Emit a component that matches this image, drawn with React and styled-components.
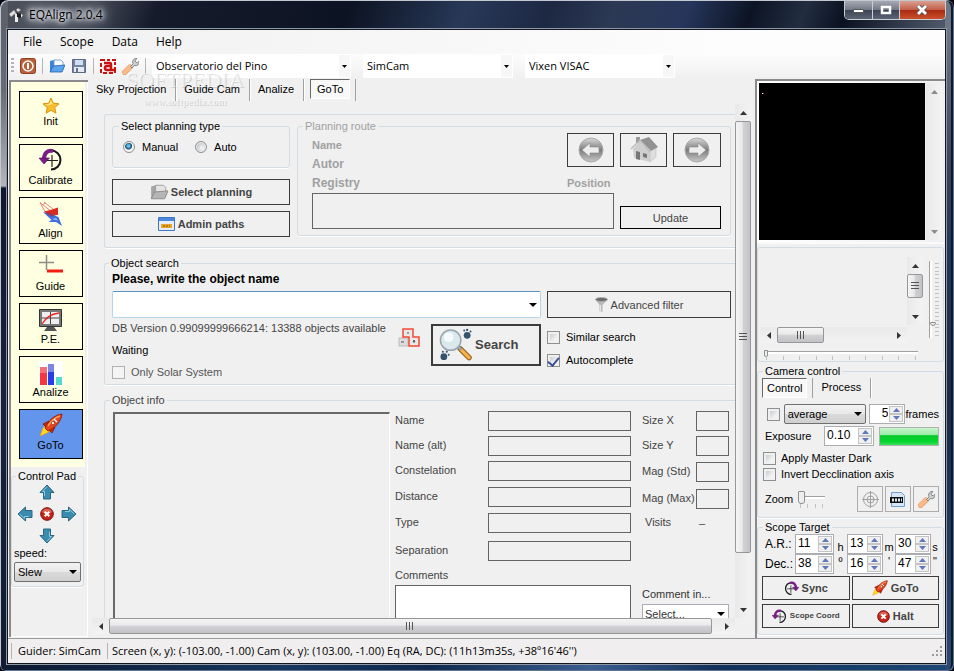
import React from 'react'
import styled, { createGlobalStyle, css } from 'styled-components'

const ui = `"Open Sans", "Noto Sans", sans-serif`;
const sans = `"Liberation Sans", Arial, sans-serif`;

const GlobalStyle = createGlobalStyle`
  * {
    box-sizing: border-box;
  }
  body {
    margin: 0;
    background: #05070f;
    overflow: hidden;
    font-family: ${sans};
    font-size: 11px;
    line-height: 14px;
    color: #000;
  }
  button, input, select, textarea {
    font: inherit;
    color: inherit;
    margin: 0;
    border-radius: 0;
  }
  svg {
    display: block;
    flex: none;
  }
`;

/* ---------- window frame ---------- */

const Window = styled.div`
  height: 100vh;
  display: flex;
  flex-direction: column;
  padding: 0 8px 7px 7px;
  border-radius: 8px 8px 6px 6px;
  box-shadow: inset 1px 1px 0 #c3c8d0, inset -1px -1px 0 #5e7594, inset -3px 0 0 #10182a;
  background:
    linear-gradient(to bottom, #5d626c 30px, #686c76 90px, #b4b4ba 186px, #0f1830 188px, #16233f 60%, #101b33) left / 8px 100% no-repeat,
    linear-gradient(to bottom, #6d7684 30px, #3a4355 170px, #26385a 240px, #1a2a49 60%, #2b4872) right / 9px 100% no-repeat,
    linear-gradient(to right, #0c1830, #17375f 30%, #10284c 45%, #3b5e90 62%, #12305a 75%, #1d4775) bottom / 100% 8px no-repeat,
    linear-gradient(110deg, #4b505b 0, #454a56 90px, #151b2b 150px, #0c1322 330px, #283858 440px, #1d2843 520px, #2c3954 580px, #26355a 650px, #0c1424 710px, #222d40 760px, #0a1120 800px, #3c4657 870px, #6e7888 940px);
`;

const TitleBar = styled.header`
  height: 29px;
  flex: none;
  display: flex;
  align-items: center;
  padding-left: 2px;
`;

const Title = styled.h1`
  flex: 1;
  margin: 0 0 0 5px;
  font: 400 12px/16px ${ui};
  text-shadow: 0 0 4px #fff, 0 0 6px #fff, 0 0 10px #dfe6f0, 0 0 12px #c4cedc, 0 0 16px #c4cedc;
`;

const CaptionButtons = styled.div`
  align-self: flex-start;
  display: flex;
  margin-top: 1px;
  border: 1px solid #c9ced6;
  border-top: 0;
  border-radius: 0 0 5px 5px;
  overflow: hidden;
`;

const CaptionButton = styled.button`
  width: ${({ $close }) => ($close ? 46 : 27)}px;
  height: 18px;
  padding: 0;
  border: 0;
  border-left: ${({ $first }) => ($first ? '0' : '1px solid #c9ced6')};
  display: grid;
  place-items: center;
  background: ${({ $close }) =>
    $close
      ? 'linear-gradient(#d9a090, #c4604a 48%, #a82a10 50%, #c9502c)'
      : 'linear-gradient(#a4a9b3, #737986 48%, #3c4353 50%, #5b6475)'};
`;

const Client = styled.div`
  flex: 1;
  min-height: 0;
  display: flex;
  flex-direction: column;
  border: 1px solid #10151f;
  outline: 1px solid #8d97a6;
  background: #f0f0f0;
`;

const MenuBar = styled.nav`
  height: 24px;
  flex: none;
  display: flex;
  align-items: center;
  gap: 18px;
  padding-left: 15px;
  background: linear-gradient(to right, #f0f0f0, #fdfdfd 80%);
`;

const MenuItem = styled.button`
  padding: 0;
  border: 0;
  background: none;
  font: 12px/16px ${ui};
`;

const Toolbar = styled.div`
  height: 24px;
  flex: none;
  display: flex;
  align-items: center;
  gap: 6px;
  padding-left: 3px;
  background: linear-gradient(#fdfdfd, #f0f0f0);
`;

const Grip = styled.span`
  width: 3px;
  height: 16px;
  background: repeating-linear-gradient(#b4b4b4 0 2px, transparent 2px 4px);
`;

const Separator = styled.span`
  width: 1px;
  height: 16px;
  background: #b5b5b5;
`;

const IconButton = styled.button`
  padding: 0;
  border: 0;
  background: none;
`;

const ToolbarCombos = styled.div`
  display: flex;
  gap: 12px;
`;

/* ---------- controls ---------- */

const Stack = styled.span`
  display: grid;
  width: ${({ $width }) => ($width ? `${$width}px` : 'auto')};
  flex: none;
  align-items: center;

  > * {
    grid-area: 1 / 1;
  }
  > svg {
    justify-self: end;
    margin-right: 4px;
    pointer-events: none;
  }
`;

const lookOf = {
  tool: css`
    height: 24px;
    padding: 0 20px 0 4px;
    border: 0;
    background: linear-gradient(#f7f7f7, #f7f7f7) right 1px center / 11px 22px no-repeat #fff;
    font: 11px/16px ${ui};
  `,
  button: css`
    height: 20px;
    padding: 0 16px 0 3px;
    border: 1px solid #707070;
    border-radius: 2px;
    background: linear-gradient(#f2f2f2, #e8e8e8 50%, #dadada 50%, #cfcfcf);
  `,
  field: css`
    height: 20px;
    padding: 0 16px 0 2px;
    border: 1px solid #a9adb8;
    background: #fff;
  `,
};

const SelectBox = styled.select`
  width: 100%;
  min-width: 0;
  appearance: none;
  outline: none;
  ${({ $look }) => lookOf[$look]}
`;

const Combo = ({ label, value, width, look, id }) => (
  <Stack $width={width}>
    <SelectBox $look={look} aria-label={label} id={id}>
      <option>{value}</option>
    </SelectBox>
    {look === 'tool' ? (
      <svg width="5" height="3"><path d="M0 0h5L2.500 3z" fill="#000" /></svg>
    ) : (
      <svg width="8" height="4"><path d="M0 0h8l-4 4z" fill="#000" /></svg>
    )}
  </Stack>
);

const Check = styled.input.attrs({ type: 'checkbox' })`
  appearance: none;
  width: 13px;
  height: 13px;
  flex: none;
  display: grid;
  justify-items: center;
  align-items: start;
  border: 1px solid #8e8f8f;
  background: linear-gradient(135deg, #c8ced4, #f4f4f4 80%) content-box #f4f4f4;
  padding: 2px;

  &:disabled {
    border-color: #b1b1b1;
    background: #f4f4f4;
  }
  &:checked::after {
    content: "";
    width: 5px;
    height: 9px;
    margin-top: -2px;
    border: solid #3a4f94;
    border-width: 0 2px 2px 0;
    transform: rotate(40deg);
  }
`;

const Radio = styled.input.attrs({ type: 'radio' })`
  appearance: none;
  width: 12px;
  height: 12px;
  flex: none;
  border: 1px solid #8e8f8f;
  border-radius: 50%;
  background: ${({ defaultChecked }) =>
    defaultChecked
      ? 'radial-gradient(circle at 45% 40%, #6cc4ee 0 1px, #0d5583 3px, #1c3b52 3px, #f4f4f4 4px)'
      : 'radial-gradient(circle at 60% 60%, #fafafa, #c6cacd 5px)'};
  box-shadow: inset 0 0 0 1px #f4f4f4;
`;

const Label = styled.label`
  display: flex;
  align-items: center;
  gap: ${({ $gap }) => $gap || 5}px;
  color: ${({ $muted }) => ($muted ? '#555' : '#000')};
  line-height: 16px;
  white-space: nowrap;
`;

const Group = styled.fieldset`
  min-width: 0;
  margin: 0;
  padding: ${({ $pad }) => $pad || '0 4px'};
  border: 1px solid #d2dce3;
  border-radius: 3px;
  box-shadow: 0 1px 0 #fff;
  height: ${({ $height }) => ($height ? `${$height}px` : 'auto')};
  ${({ $open }) => $open && 'border-right: 0; border-radius: 3px 0 0 3px;'}
`;

const Legend = styled.legend`
  margin-left: ${({ $indent }) => $indent || 0}px;
  padding: 0 2px;
  height: 14px;
  color: ${({ $tone }) => $tone || '#000'};
`;

const FlatButton = styled.button`
  display: flex;
  align-items: center;
  justify-content: center;
  gap: 3px;
  height: ${({ $height }) => $height || 24}px;
  padding: 0;
  border: ${({ $thick }) => ($thick ? 2 : 1)}px solid ${({ $edge }) => $edge || '#3c3c3c'};
  background: #f0f0f0;
  color: #444;
  font-weight: ${({ $plain }) => ($plain ? 400 : 700)};
  font-size: ${({ $size }) => $size || 11}px;
  white-space: nowrap;
`;

const TextField = styled.input`
  width: 100%;
  min-width: 0;
  height: ${({ $height }) => $height || 20}px;
  border: 1px solid #646464;
  background: #f0f0f0;
  outline: none;
`;

const SpinBox = styled.span`
  display: flex;
  width: ${({ $width }) => $width}px;
  height: 20px;
  padding: 1px;
  border: 1px solid #abadb3;
  background: #fff;
`;

const SpinInput = styled.input`
  flex: 1;
  width: 0;
  min-width: 0;
  padding: 0 1px 2px;
  border: 0;
  outline: none;
  background: none;
  font-size: 12px;
  text-align: ${({ $right }) => ($right ? 'right' : 'left')};
`;

const SpinArrows = styled.span`
  display: grid;
  width: 14px;
  grid-template-rows: 1fr 1fr;
`;

const SpinArrow = styled.button`
  display: grid;
  place-items: center;
  padding: 0;
  border: 1px solid #c4c4c4;
  background: #f0f0f0;
`;

const Spin = ({ label, value, width, right, id }) => (
  <SpinBox $width={width}>
    <SpinInput id={id} aria-label={label} defaultValue={value} $right={right} />
    <SpinArrows>
      <SpinArrow aria-label="Up">
        <svg width="7" height="4"><path d="M0 4h7L3.500 0z" fill="#5f78b8" /></svg>
      </SpinArrow>
      <SpinArrow aria-label="Down">
        <svg width="7" height="4"><path d="M0 0h7L3.500 4z" fill="#5f78b8" /></svg>
      </SpinArrow>
    </SpinArrows>
  </SpinBox>
);

/* ---------- scrollbars and sliders ---------- */

const Track = styled.div`
  display: flex;
  flex-direction: ${({ $vertical }) => ($vertical ? 'column' : 'row')};
  width: ${({ $vertical }) => ($vertical ? '16px' : 'auto')};
  height: ${({ $vertical }) => ($vertical ? 'auto' : '16px')};
  min-width: 0;
  min-height: 0;
  background: linear-gradient(${({ $vertical }) => ($vertical ? 'to right' : 'to bottom')}, #e9e9e9, #f3f3f3);
`;

const TrackEnd = styled.button`
  flex: 0 0 17px;
  display: grid;
  place-items: center;
  padding: 0;
  border: 0;
  background: none;
`;

const Lane = styled.div`
  flex: 1;
  min-height: 0;
  display: flex;
  flex-direction: inherit;
`;

const Thumb = styled.div`
  flex: 0 0 ${({ $size }) => $size};
  display: grid;
  place-items: center;
  border: 1px solid #979797;
  border-radius: 2px;
  background: linear-gradient(${({ $vertical }) => ($vertical ? 'to right' : 'to bottom')}, #f5f5f5, #e9e9eb 45%, #d2d2d5 50%, #c3c3c7);
`;

const ends = {
  up: 'M0 4l3.500-4L7 4z',
  down: 'M0 0h7L3.500 4z',
  left: 'M4 0v7L0 3.500z',
  right: 'M0 0v7l4-3.500z',
};

const End = ({ dir, dim }) => (
  <TrackEnd aria-label={dir}>
    <svg width={dir === 'up' || dir === 'down' ? 7 : 4} height={dir === 'up' || dir === 'down' ? 4 : 7}>
      <path d={ends[dir]} fill={dim ? '#8b8b8b' : '#333'} />
    </svg>
  </TrackEnd>
);

const ScrollBar = ({ vertical, size, dim }) => (
  <Track $vertical={vertical}>
    <End dir={vertical ? 'up' : 'left'} dim={dim} />
    <Lane>
      {size && (
        <Thumb $vertical={vertical} $size={size}>
          <svg width="8" height="8" stroke="#555" strokeWidth="1">
            <path d={vertical ? 'M0 .5h8M0 3.500h8M0 6.500h8' : 'M.5 0v8M3.500 0v8M6.500 0v8'} />
          </svg>
        </Thumb>
      )}
    </Lane>
    <End dir={vertical ? 'down' : 'right'} dim={dim} />
  </Track>
);

const knob = css`
  appearance: none;
  border: 1px solid #8e8f8f;
  border-radius: 1px 1px 3px 3px;
  background: #efefef;
`;

const Slider = styled.input.attrs({ type: 'range' })`
  appearance: none;
  display: block;
  background: none;
  outline: none;
  width: 100%;
  height: ${({ $big }) => ($big ? 14 : 8)}px;

  &::-webkit-slider-runnable-track {
    height: 3px;
    border-top: 1px solid #a0a0a0;
    background: #fff;
  }
  &::-webkit-slider-thumb {
    ${knob}
    width: ${({ $big }) => ($big ? 7 : 4)}px;
    height: ${({ $big }) => ($big ? 13 : 7)}px;
    margin-top: ${({ $big }) => ($big ? -6 : -2)}px;
  }
`;

const TallSlider = styled.input.attrs({ type: 'range' })`
  appearance: none;
  writing-mode: vertical-lr;
  direction: rtl;
  width: 7px;
  height: 100%;
  background: none;
  outline: none;

  &::-webkit-slider-runnable-track {
    width: 3px;
    border-left: 1px solid #a0a0a0;
    background: #fff;
  }
  &::-webkit-slider-thumb {
    ${knob}
    width: 6px;
    height: 4px;
  }
`;

const Ticks = styled.div`
  display: flex;
  flex-direction: ${({ $vertical }) => ($vertical ? 'column' : 'row')};
  justify-content: space-between;
  padding: ${({ $vertical }) => ($vertical ? '2px 0' : '0 2px')};

  span {
    background: #c2c2c2;
    width: ${({ $vertical }) => ($vertical ? 4 : 1)}px;
    height: ${({ $vertical }) => ($vertical ? 1 : 4)}px;
  }
`;

const TickRow = ({ count, vertical }) => (
  <Ticks $vertical={vertical}>
    {Array.from({ length: count }, (_, i) => <span key={i} />)}
  </Ticks>
);

/* ---------- left column ---------- */

const Body = styled.main`
  flex: 1;
  min-height: 0;
  display: flex;
`;

const LeftColumn = styled.aside`
  width: 79px;
  flex: none;
  display: flex;
  flex-direction: column;
  align-items: flex-start;
  gap: 2px;
  margin: 2px 0 1px 1px;
  border: solid #8a8a8a;
  border-width: 2px 0 0 2px;
  box-shadow: inset -1px -1px 0 #fff;
`;

const Steps = styled.div`
  display: flex;
  flex-direction: column;
  gap: 6px;
  width: 74px;
  padding: 9px 2px 8px 8px;
  background: #ffffe1;
`;

const Step = styled.button`
  display: flex;
  flex-direction: column;
  align-items: center;
  justify-content: flex-end;
  gap: ${({ $gap }) => $gap || 0}px;
  height: ${({ $active }) => ($active ? 50 : 47)}px;
  padding: 0 1px ${({ $raise }) => $raise || 4}px 0;
  border: 1px solid #000;
  background: ${({ $active }) => ($active ? '#6495ed' : '#ffffe1')};
`;

const Pad = styled.div`
  display: grid;
  grid-template-columns: repeat(3, 16px);
  grid-auto-rows: 16px;
  place-items: center;
  gap: 6px;
  margin: 1px 0 2px 3px;
`;

const PadLabel = styled.label`
  display: block;
  line-height: 14px;
  margin-bottom: 2px;
`;

/* ---------- center ---------- */

const Center = styled.section`
  flex: 1;
  min-width: 0;
  display: flex;
  flex-direction: column;
  padding: 1px 4px 4px 0;
`;

const TabBar = styled.div`
  height: 22px;
  flex: none;
  display: flex;
`;

const Tab = styled.button`
  padding: 0 9px 2px 8px;
  border: 0;
  border-right: 1px solid #a0a0a0;
  box-shadow: 1px 0 0 #fff;
  background: none;
`;

const ActiveTab = styled.button`
  margin: ${({ $first }) => ($first ? '0' : '0 0 0 6px')};
  padding: 0 ${({ $first }) => ($first ? 4 : 6)}px;
  height: 20px;
  border: 1px solid #fff;
  border-top-color: #696969;
  border-left-color: #696969;
  background: #f8f8f8;
`;

const TabDivider = styled.span`
  width: 1px;
  margin: 0 0 0 5px;
  background: #a0a0a0;
`;

const ScrollFrame = styled.div`
  flex: 1;
  min-height: 0;
  display: grid;
  grid-template: minmax(0, 1fr) 16px / minmax(0, 1fr) 16px;
  padding: 3px 0 0 4px;
`;

const Viewport = styled.div`
  overflow: hidden;
  display: flex;
  flex-direction: column;
  gap: 8px;
  padding: 10px 0 0 12px;

  > * {
    flex: none;
  }
`;

const PlanRow = styled.div`
  display: flex;
  gap: 7px;
`;

const PlanLeft = styled.div`
  width: 178px;
  flex: none;
  display: grid;
  grid-template-rows: 54px 26px 26px;
  align-items: start;
  gap: 6px;
`;

const Choices = styled.div`
  display: flex;
  gap: 17px;
  padding: 6px 0 0 4px;
`;

const RouteGroup = styled(Group)`
  flex: 1;
`;

const RouteGrid = styled.div`
  display: grid;
  grid-template: 33px 27px 36px / minmax(0, 1fr) 47px 47px 48px;
  align-items: start;
  gap: 0 6px;
  padding: 0 9px 0 9px;
`;

const RouteLabels = styled.div`
  grid-row: 1 / 3;
  display: grid;
  align-content: start;
  padding-top: 3px;
  color: #a0a0a0;
  font-weight: 700;
  line-height: 19px;
`;

const RouteLabel = styled.span`
  font-size: ${({ $large }) => ($large ? 12 : 11)}px;
`;

const PositionLabel = styled.label`
  grid-area: 2 / 2;
  padding-top: 10px;
  color: #a0a0a0;
  font-weight: 700;
`;

const PositionBox = styled.textarea`
  grid-area: 3 / 1 / 4 / 3;
  align-self: stretch;
  resize: none;
  border: 1px solid #646464;
  background: #f0f0f0;
  outline: none;
`;

const UpdateButton = styled(FlatButton)`
  grid-area: 3 / 3 / 4 / 5;
  align-self: end;
`;

const Prompt = styled.label`
  display: block;
  height: 21px;
  padding-top: 2px;
  font-size: 12px;
  font-weight: 700;
`;

const SearchGrid = styled.div`
  display: grid;
  grid-template-columns: minmax(0, 1fr) 184px;
  gap: 0 6px;
`;

const ObjectInput = styled.input`
  width: 100%;
  height: 27px;
  padding: 0 20px 0 4px;
  border: 1px solid #b5d5ea;
  border-top-color: #5794bf;
  border-radius: 2px;
  background: #fff;
  outline: none;
`;

const SearchLine = styled.div`
  display: flex;
  padding-top: 2px;
`;

const SearchStatus = styled.div`
  flex: 1;
  min-width: 0;
  display: grid;
  align-content: start;
  gap: 6px;
  line-height: 16px;
  white-space: nowrap;
`;

const Muted = styled.span`
  color: #444;
`;

const CubeIcon = styled.svg`
  margin: 8px 11px 0 0;
`;

const SearchButton = styled(FlatButton)`
  width: 110px;
  margin-top: 4px;
  justify-content: flex-start;
  padding-left: 6px;
`;

const SearchOptions = styled.div`
  display: grid;
  align-content: start;
  gap: 7px;
  padding-top: 11px;
`;

const InfoGrid = styled.div`
  display: grid;
  grid-template-columns: minmax(0, 1fr) 236px 98px;
  padding: 4px 6px 0 1px;
  color: #444;
`;

const InfoList = styled.div`
  height: 240px;
  margin: 1px 5px 0 0;
  border: solid #696969;
  border-width: 2px 1px 0 2px;
  border-right-color: #fff;
`;

const Details = styled.div`
  display: grid;
  grid-template-columns: 93px 1fr;
  grid-template-rows: 25px 25px 26px 26px 28px 25px 19px auto;

  > label {
    line-height: 19px;
  }
`;

const CommentBox = styled.textarea`
  grid-column: 1 / 3;
  height: 60px;
  resize: none;
  border: 1px solid #646464;
  outline: none;
`;

const Measures = styled.div`
  display: grid;
  grid-template-columns: 54px 1fr;
  grid-template-rows: 25px 26px 27px 72px 43px 24px;
  padding-left: 11px;
  line-height: 19px;
  white-space: nowrap;
`;

const WideCell = styled.div`
  grid-column: 1 / 3;
  align-self: ${({ $end }) => ($end ? 'end' : 'start')};
  color: #333;
`;

const VisitsLabel = styled.span`
  display: block;
  padding: 5px 0 0 3px;
`;

const MeasureField = styled(TextField)`
  display: block;
  width: 33px;
`;

/* ---------- right column ---------- */

const RightColumn = styled.aside`
  width: 190px;
  flex: none;
  display: flex;
  flex-direction: column;
  gap: 2px;
  margin-top: 1px;
  padding-right: 1px;
  border: solid #8a8a8a;
  border-width: 2px 0 0 2px;
`;

const Preview = styled.div`
  display: grid;
  grid-template-columns: 166px 16px;
  justify-content: space-between;
  height: 163px;
  margin-bottom: 1px;
  padding: 2px;
  border-bottom: 2px solid #fafafa;
  background: linear-gradient(to right, #fff, #f0f0f0);
`;

const Screen = styled.div`
  background: #000;
  padding: 10px 0 0 2px;
  line-height: 0;
`;

const PanBox = styled.div`
  height: 115px;
  padding: 9px 4px 0 2px;
  border: 1px solid #d2dce3;
  border-radius: 3px;
`;

const PanGrid = styled.div`
  display: grid;
  grid-template: 68px 16px / 147px 16px auto;
  gap: 2px 0;
`;

const PanVertical = styled.div`
  grid-area: 1 / 2;
  display: grid;
`;

const PanHorizontal = styled.div`
  grid-area: 2 / 1;
`;

const PanSlider = styled.div`
  grid-area: 1 / 3 / 3 / 4;
  display: flex;
  justify-content: flex-end;
  gap: 1px;
  padding: 4px 0 5px;
`;

const BottomSlider = styled.div`
  width: 154px;
  margin: 5px 0 0 4px;
`;

const SideTabs = styled.div`
  display: flex;
  height: 20px;
  margin-bottom: 6px;
`;

const SideRow = styled.div`
  display: flex;
  align-items: center;
  gap: ${({ $gap }) => $gap || 0}px;
  height: ${({ $height }) => $height || 20}px;
  margin-bottom: ${({ $after }) => $after || 0}px;
  padding-left: ${({ $indent }) => $indent || 0}px;
  line-height: 14px;
`;

const Spread = styled.span`
  flex: 1;
`;

const Progress = styled.div`
  width: 60px;
  height: 19px;
  border: 1px solid #b2b2b2;
  background: linear-gradient(#c6f5cf, #9aeba8 40%, #06c92a 45%, #07d62f 80%, #3ddf5d);
`;

const ZoomSlider = styled.div`
  width: 27px;
  margin-left: 3px;
`;

const SquareButton = styled.button`
  width: 26px;
  height: 26px;
  display: grid;
  place-items: center;
  padding: 0;
  border: 1px solid #adadad;
  background: #f0f0f0;
`;

const TargetGrid = styled.div`
  display: grid;
  grid-template-columns: 33px 39px 13px 36px 12px 36px 1fr;
  grid-auto-rows: 20px;
  align-items: center;
  font-size: 12px;

  > label {
    padding-left: 3px;
  }
`;

const Unit = styled.span`
  justify-self: center;
  align-self: ${({ $top }) => ($top ? 'start' : 'end')};
  font-size: 11px;
`;

const Actions = styled.div`
  display: grid;
  grid-template-columns: 1fr 1fr;
  gap: 4px 2px;
  margin-top: 2px;
`;

/* ---------- status ---------- */

const StatusBar = styled.footer`
  height: 25px;
  flex: none;
  display: flex;
  align-items: center;
  gap: 4px;
  padding: 0 2px 0 3px;
  border-top: 1px solid #9a9a9a;
  background: #f0eeee;
  font: 11px/16px ${ui};
  white-space: nowrap;
`;

const StatusItem = styled.span`
  padding: 0 ${({ $wide }) => ($wide ? 2 : 0)}px;
`;

const Watermark = styled.div`
  position: absolute;
  left: 124px;
  top: 68px;
  width: 122px;
  text-align: center;
  pointer-events: none;
  color: rgba(255, 255, 255, 0.5);
  text-shadow: 1px 1px 0 rgba(120, 120, 120, 0.25);
  font: 22px/24px "Liberation Serif", serif;

  small {
    display: block;
    font: 700 10px/20px "Liberation Serif", serif;
  }
`;

/* ---------- icons ---------- */

const Folder = ({ gray, size = 16 }) => (
  <svg width={size} height={size} viewBox="0 0 16 16">
    <path d="M1 3l4-1 1 1h4v10H1z" fill={gray ? '#a5a5a5' : '#3f86d2'} />
    <path d="M5 2h7l2 2v7H5z" fill={gray ? '#e4e4e4' : '#fff'} stroke={gray ? '#999' : '#5a93cf'} strokeWidth=".8" />
    <path d="M1 14l3-6 12-1-3 7z" fill={gray ? '#b5b5b5' : '#5ba3ec'} stroke={gray ? '#888' : '#1e62b5'} strokeWidth=".8" />
  </svg>
);

const Wrench = () => (
  <svg width="17" height="17" viewBox="0 0 16 16">
    <path d="M2.500 13.500L7.500 8.500" stroke="#e09a64" strokeWidth="5" strokeLinecap="round" />
    <path d="M2.500 13.500L7.500 8.500" stroke="#fdb988" strokeWidth="4" strokeLinecap="round" />
    <path d="M8 8l2.500-2.500a3.300 3.300 0 0 1 3.500-5L12.300 2.700l.8 1.500 1.500.2L16 3a3.300 3.300 0 0 1-4.500 4L9.500 9.500z" fill="#cfd3d6" stroke="#777" strokeWidth=".8" />
  </svg>
);

const Rocket = ({ size = 24 }) => (
  <svg width={size} height={size} viewBox="0 0 24 24">
    <path d="M1 23l3-8 2-2 5 5-3 2z" fill="#ffd51e" stroke="#e89a10" strokeWidth=".6" />
    <path d="M4 11l6-3 3 3-5 4zM13 20l3-6-3-3-4 5z" fill="#c72a10" stroke="#7b1509" strokeWidth=".8" />
    <path d="M6 15C9 8 15 2 23 1c-1 8-7 14-14 17z" fill="#e8431b" stroke="#8c1b0a" strokeWidth=".9" />
    <path d="M9 13c3-5 6-8 12-10" stroke="#ff9c56" strokeWidth="1.500" fill="none" />
    <path d="M15 6l3 3" stroke="#fff" strokeWidth="1.300" />
    <circle cx="14" cy="10" r="1.700" fill="#fff1d2" stroke="#8c1b0a" strokeWidth=".6" />
  </svg>
);

const Orbit = ({ size = 24, flip }) => (
  <svg width={size} height={size} viewBox="0 0 24 24">
    <g transform={flip ? 'matrix(-1 0 0 1 24 0)' : undefined}>
      <path d="M12 2.500a9.500 9.500 0 0 1 0 19" fill="none" stroke="#15151c" strokeWidth="2" />
      <path d="M14 3.200C9 1.500 5 5 5 11" fill="none" stroke="#7b1d86" strokeWidth="4" />
      <path d="M0 10h10.500L5 16z" fill="#7b1d86" stroke="#4d0e55" strokeWidth=".6" />
      <path d="M13 7v12M8 12.500h11" stroke="#222" strokeWidth="1.200" />
    </g>
  </svg>
);

const Cross = ({ size = 14 }) => (
  <svg width={size} height={size} viewBox="0 0 14 14">
    <circle cx="7" cy="7" r="6.300" fill="#c5261c" stroke="#75120d" />
    <path d="M2 5a5.500 5.500 0 0 1 10 0q-5 3-10 0" fill="#e77a6d" opacity=".7" />
    <path d="M4.700 4.700l4.600 4.600M9.300 4.700L4.700 9.300" stroke="#fff" strokeWidth="2" />
  </svg>
);

const PadArrow = ({ turn }) => (
  <svg width="16" height="16" viewBox="0 0 16 16">
    <g transform={`rotate(${turn} 8 8)`}>
      <path d="M8 1l7 7.500h-3.500V15h-7V8.500H1z" fill="#3a8cae" stroke="#2a6680" />
      <path d="M8 2.500L3.500 7.500h2V12" fill="none" stroke="#8ccbe0" />
    </g>
  </svg>
);

const RoundArrow = ({ right }) => (
  <svg width="26" height="26" viewBox="0 0 26 26">
    <defs>
      <linearGradient id="ball" x1="0" y1="0" x2="0" y2="1">
        <stop offset="0" stopColor="#d8d8d8" />
        <stop offset=".5" stopColor="#7d7d7d" />
        <stop offset="1" stopColor="#c8c8c8" />
      </linearGradient>
    </defs>
    <circle cx="13" cy="13" r="12" fill="url(#ball)" stroke="#aaa" />
    <path d="M4 13l8-7v4h9v6h-9v4z" fill="#ededed" stroke="#888" strokeWidth=".6" transform={right ? 'rotate(180 13 13)' : undefined} />
  </svg>
);

const House = () => (
  <svg width="28" height="28" viewBox="0 0 28 28">
    <path d="M6 1h4v6H6z" fill="#999" />
    <path d="M3 13l8-9 9 11v11L4 22z" fill="#cfcfcf" />
    <path d="M20 14l6-3v10l-6 5z" fill="#dedede" stroke="#b5b5b5" strokeWidth=".5" />
    <path d="M10 4l9-3 9 10-7 4z" fill="#929292" />
    <path d="M1 13L10 4l10 12" fill="none" stroke="#bdbdbd" strokeWidth="1.500" />
    <path d="M6 15l4 1v8l-4-1z" fill="#777" />
    <path d="M13 17l4 1v4l-4-1z" fill="#777" />
  </svg>
);

const Telescope = () => (
  <svg width="15" height="16" viewBox="0 0 15 16">
    <path d="M0 7l5-4 2 3-5 4zM7 3l2-2 3 2-3 2z" fill="#dedede" stroke="#777" strokeWidth=".6" />
    <path d="M6 6l3 2v7H6z" fill="#eee" />
    <path d="M8 6l4 1v4l-4-1z" fill="#1b1b1b" />
    <path d="M12 7l2 1-2 3z" fill="#eee" />
  </svg>
);

const Star = () => (
  <svg width="18" height="17" viewBox="0 0 18 17">
    <path d="M9 1l2.300 5.200 5.700.6-4.300 3.800 1.300 5.600L9 13.300 4 16.200l1.300-5.600L1 6.800l5.700-.6z" fill="#f7bd2d" stroke="#dc9212" />
    <path d="M9 3l1.500 4-5 1.500-2-1 3.600-.7z" fill="#ffe48b" />
  </svg>
);

const AlignIcon = () => (
  <svg width="24" height="25" viewBox="0 0 24 25">
    <path d="M1 1.500l5 9M1 1.500l10 8M5 1l9 7M3 4l4-2" fill="none" stroke="#e8857b" />
    <path d="M5 10.500l8-2L19 6.500V14l-9-.5z" fill="#d92b1f" />
    <path d="M4 11l7 2 8.500 3L23 25l-6-4H9.500l3-2z" fill="#3d6fe0" />
    <path d="M5 11l13 3-6 1.500z" fill="#93395f" />
    <path d="M13 18l6 1.500L17 17z" fill="#9cbcf5" />
  </svg>
);

const GuideIcon = () => (
  <svg width="24" height="20" viewBox="0 0 24 20">
    <path d="M7.500 0v15M0 7.500h15" stroke="#8d8d88" strokeWidth="1.500" />
    <path d="M8 16h16" stroke="#f21d12" strokeWidth="3" />
  </svg>
);

const MonitorIcon = () => (
  <svg width="23" height="23" viewBox="0 0 23 23">
    <path d="M.5.500h22v17H.5z" fill="#777" stroke="#333" />
    <path d="M3 3h17v12H3z" fill="#efefef" />
    <path d="M11.500 3v12M3 9h17" stroke="#444" />
    <path d="M3 15C7 9 11 5 20 4" fill="none" stroke="#e22" strokeWidth="1.300" />
    <path d="M8 18h7l3 4H5z" fill="#555" />
  </svg>
);

const BarsIcon = () => (
  <svg width="24" height="24" viewBox="0 0 24 24">
    <path d="M0 0h24v24H0z" fill="#fff" />
    <path d="M1 6h7v18H1z" fill="#f23643" />
    <path d="M1 6h7v6H1z" fill="#f47078" />
    <path d="M9 3h6v21H9z" fill="#2540e8" />
    <path d="M9 3h6v8H9z" fill="#7c86e0" />
    <path d="M17 16h6v8h-6z" fill="#55d9d0" />
  </svg>
);

const SearchIcon = () => (
  <svg width="33" height="34" viewBox="0 0 34 34">
    <path d="M22 21l9 9" stroke="#8d5c17" strokeWidth="5.500" strokeLinecap="round" />
    <path d="M23 22l8 8" stroke="#f7b24a" strokeWidth="3.500" strokeLinecap="round" />
    <path d="M19 18l4 4" stroke="#9aa3ab" strokeWidth="3" />
    <circle cx="12" cy="12" r="10.500" fill="#dbe8ee" stroke="#9aa5ad" strokeWidth="1.600" />
    <circle cx="10" cy="9" r="5" fill="#f5fbfd" />
    <g fill="#34536e">
      <circle cx="29" cy="7" r="3.500" />
      <circle cx="26" cy="2" r="1" />
      <circle cx="29" cy="1.500" r="1.200" />
      <circle cx="32.500" cy="3" r="1" />
      <circle cx="5" cy="29" r="3.500" />
      <circle cx="4" cy="24" r="1" />
      <circle cx="8" cy="24" r="1.100" />
      <circle cx="10" cy="27" r="1" />
    </g>
  </svg>
);

const Funnel = () => (
  <svg width="13" height="15" viewBox="0 0 13 15">
    <path d="M0 2l4.500 6v6l3 1V8L13 2z" fill="#b8b8b8" />
    <path d="M5 8v6l1 .5V8z" fill="#e6e6e6" />
    <ellipse cx="6.500" cy="2.500" rx="6" ry="2" fill="#6b6b6b" stroke="#b0b0b0" />
  </svg>
);

const Calendar = () => (
  <svg width="17" height="14" viewBox="0 0 17 14">
    <path d="M.5.500h16v13H.5z" fill="#e6edf8" stroke="#3d76c5" />
    <path d="M1 1h15v3H1z" fill="#4c88dc" />
    <path d="M3 7h11v4H3z" fill="#e9a528" />
    <path d="M5 9h7" stroke="#7e5608" strokeDasharray="2 1" />
  </svg>
);

const steps = [
  { name: 'Init', icon: <Star />, raise: 9 },
  { name: 'Calibrate', icon: <Orbit />, raise: 3, gap: 1 },
  { name: 'Align', icon: <AlignIcon />, raise: 3 },
  { name: 'Guide', icon: <GuideIcon />, raise: 3, gap: 4 },
  { name: 'P.E.', icon: <MonitorIcon />, raise: 3 },
  { name: 'Analize', icon: <BarsIcon />, raise: 3 },
  { name: 'GoTo', icon: <Rocket />, raise: 6, gap: 1, active: true },
];

const infoFields = ['Name', 'Name (alt)', 'Constelation', 'Distance', 'Type', 'Separation'];
const measures = ['Size X', 'Size Y', 'Mag (Std)', 'Mag (Max)'];

const Sidebar = () => (
  <LeftColumn>
    <Steps>
      {steps.map((step) => (
        <Step key={step.name} $active={step.active} $gap={step.gap} $raise={step.raise}>
          {step.icon}
          {step.name}
        </Step>
      ))}
    </Steps>
    <Group $height={118} $pad="0 2px">
      <Legend $indent={2}>Control Pad</Legend>
      <Pad>
        <span />
        <IconButton aria-label="Up"><PadArrow turn={0} /></IconButton>
        <span />
        <IconButton aria-label="Left"><PadArrow turn={-90} /></IconButton>
        <IconButton aria-label="Stop"><Cross /></IconButton>
        <IconButton aria-label="Right"><PadArrow turn={90} /></IconButton>
        <span />
        <IconButton aria-label="Down"><PadArrow turn={180} /></IconButton>
      </Pad>
      <PadLabel htmlFor="speed">speed:</PadLabel>
      <Combo id="speed" look="button" value="Slew" width={67} />
    </Group>
  </LeftColumn>
);

const Planning = () => (
  <Group $open $height={134} $pad="4px 4px 0 7px">
    <PlanRow>
      <PlanLeft>
        <Group $height={49} $pad="0 6px">
          <Legend>Select planning type</Legend>
          <Choices>
            <Label $gap={7}><Radio name="planning" defaultChecked />Manual</Label>
            <Label $gap={7}><Radio name="planning" />Auto</Label>
          </Choices>
        </Group>
        <FlatButton $height={26}><Folder gray size={18} />Select planning</FlatButton>
        <FlatButton $height={26}><Calendar />Admin paths</FlatButton>
      </PlanLeft>
      <RouteGroup $height={117} $pad="0 0 0 5px">
        <Legend $tone="#a0a0a0">Planning route</Legend>
        <RouteGrid>
          <RouteLabels>
            <RouteLabel>Name</RouteLabel>
            <RouteLabel $large>Autor</RouteLabel>
            <RouteLabel $large>Registry</RouteLabel>
          </RouteLabels>
          <FlatButton $height={34} aria-label="Previous"><RoundArrow /></FlatButton>
          <FlatButton $height={34} aria-label="Home"><House /></FlatButton>
          <FlatButton $height={34} aria-label="Next"><RoundArrow right /></FlatButton>
          <PositionLabel htmlFor="position">Position</PositionLabel>
          <PositionBox id="position" />
          <UpdateButton $plain $height={23} $edge="#000">Update</UpdateButton>
        </RouteGrid>
      </RouteGroup>
    </PlanRow>
  </Group>
);

const ObjectSearch = () => (
  <Group $open $height={129} $pad="0 4px 0 7px">
    <Legend $indent={-3}>Object search</Legend>
    <Prompt htmlFor="object">Please, write the object name</Prompt>
    <SearchGrid>
      <Stack>
        <ObjectInput id="object" />
        <svg width="8" height="4"><path d="M0 0h8l-4 4z" /></svg>
      </Stack>
      <FlatButton $plain $height={27}><Funnel />Advanced filter</FlatButton>
      <SearchLine>
        <SearchStatus>
          <Muted>DB Version 0.99099999666214: 13388 objects available</Muted>
          <span>Waiting</span>
          <Label $muted $gap={6}><Check disabled />Only Solar System</Label>
        </SearchStatus>
        <CubeIcon width="22" height="19" viewBox="0 0 22 19">
          <path d="M1 10h9v8H1z" fill="#ddd" stroke="#bbb" />
          <path d="M5 1h10v8h6v9H11V9H5z" fill="#e8e8e8" stroke="#f04a35" strokeWidth="1.500" />
          <path d="M3 14h3M9 5h2M15 14l1-2 1 2z" stroke="#555" fill="none" />
        </CubeIcon>
        <SearchButton $thick $height={42} $size={13}><SearchIcon />Search</SearchButton>
      </SearchLine>
      <SearchOptions>
        <Label $gap={6}><Check />Similar search</Label>
        <Label $gap={6}><Check defaultChecked />Autocomplete</Label>
      </SearchOptions>
    </SearchGrid>
  </Group>
);

const ObjectInfo = () => (
  <Group $open $height={300} $pad="0 0 0 7px">
    <Legend $indent={-2} $tone="#444">Object info</Legend>
    <InfoGrid>
      <InfoList />
      <Details>
        {infoFields.map((name) => (
          <React.Fragment key={name}>
            <label htmlFor={name}>{name}</label>
            <TextField id={name} />
          </React.Fragment>
        ))}
        <label htmlFor="comments">Comments</label>
        <span />
        <CommentBox id="comments" />
      </Details>
      <Measures>
        {measures.map((name) => (
          <React.Fragment key={name}>
            <label htmlFor={name}>
              {name}
              {name === 'Mag (Max)' && <VisitsLabel>Visits</VisitsLabel>}
            </label>
            <span>
              <MeasureField id={name} />
              {name === 'Mag (Max)' && <VisitsLabel>–</VisitsLabel>}
            </span>
          </React.Fragment>
        ))}
        <WideCell $end>Comment in...</WideCell>
        <WideCell><Combo label="Comment in" look="field" value="Select..." width={87} /></WideCell>
      </Measures>
    </InfoGrid>
  </Group>
);

const CameraPanel = () => (
  <Group $height={154} $pad="0 4px">
    <Legend $indent={1}>Camera control</Legend>
    <SideTabs>
      <ActiveTab $first>Control</ActiveTab>
      <TabDivider />
      <Tab>Process</Tab>
    </SideTabs>
    <SideRow $indent={5} $after={2}>
      <Check aria-label="Stack frames" />
      <Spread />
      <Combo label="Stack mode" look="button" value="average" width={82} />
      <Spread />
      <Spin id="frames" value="5" width={36} right />
      <label htmlFor="frames">frames</label>
    </SideRow>
    <SideRow $indent={3} $after={4} $gap={5}>
      <label htmlFor="exposure">Exposure</label>
      <Spread />
      <Spin id="exposure" value="0.10" width={50} />
      <Progress role="progressbar" aria-valuenow={100} />
    </SideRow>
    <SideRow $indent={1} $height={16}><Label><Check />Apply Master Dark</Label></SideRow>
    <SideRow $indent={1} $height={16} $after={4}><Label><Check />Invert Decclination axis</Label></SideRow>
    <SideRow $indent={3} $height={26} $gap={2}>
      <label htmlFor="zoom">Zoom</label>
      <ZoomSlider>
        <Slider id="zoom" $big defaultValue={0} />
        <TickRow count={4} />
      </ZoomSlider>
      <Spread />
      <SquareButton aria-label="Crosshair">
        <svg width="17" height="17" fill="none" stroke="#a0a0a0">
          <circle cx="8.500" cy="8.500" r="7" />
          <circle cx="8.500" cy="8.500" r="3.500" />
          <path d="M8.500 0v17M0 8.500h17" />
        </svg>
      </SquareButton>
      <SquareButton aria-label="Record">
        <svg width="16" height="15">
          <path d="M1.500.500h10l3 3v11h-13z" fill="#d4e6f8" stroke="#6f9fd0" />
          <path d="M0 5h13v6H0z" fill="#111" />
          <path d="M2 8h10" stroke="#dce8f2" strokeWidth="3" strokeDasharray="2 1" />
        </svg>
      </SquareButton>
      <SquareButton aria-label="Settings"><Wrench /></SquareButton>
    </SideRow>
  </Group>
);

const ScopePanel = () => (
  <Group $height={115} $pad="0 4px">
    <Legend $indent={1}>Scope Target</Legend>
    <TargetGrid>
      <label htmlFor="ar">A.R.:</label>
      <Spin id="ar" value="11" width={39} />
      <Unit>h</Unit>
      <Spin label="A.R. minutes" value="13" width={36} />
      <Unit>m</Unit>
      <Spin label="A.R. seconds" value="30" width={36} />
      <Unit>s</Unit>
      <label htmlFor="dec">Dec.:</label>
      <Spin id="dec" value="38" width={39} />
      <Unit $top>º</Unit>
      <Spin label="Dec. minutes" value="16" width={36} />
      <Unit $top>'</Unit>
      <Spin label="Dec. seconds" value="47" width={36} />
      <Unit $top>"</Unit>
    </TargetGrid>
    <Actions>
      <FlatButton><Orbit size={15} flip />Sync</FlatButton>
      <FlatButton><Rocket size={16} />GoTo</FlatButton>
      <FlatButton $size={8}><Orbit size={15} />Scope Coord</FlatButton>
      <FlatButton><Cross size={13} />Halt</FlatButton>
    </Actions>
  </Group>
);

const App = () => {
  return (
    <>
      <GlobalStyle />
      <Window>
        <TitleBar>
          <Telescope />
          <Title>EQAlign 2.0.4</Title>
          <CaptionButtons>
            <CaptionButton $first aria-label="Minimize">
              <svg width="12" height="5"><path d="M.5 1.500h10v3H.5z" fill="#fff" stroke="#555" /></svg>
            </CaptionButton>
            <CaptionButton aria-label="Maximize">
              <svg width="12" height="10"><path d="M2 2h8v6H2z" fill="none" stroke="#fff" strokeWidth="2.500" /></svg>
            </CaptionButton>
            <CaptionButton $close aria-label="Close">
              <svg width="13" height="11">
                <path d="M2 1l8 8M10 1L2 9" stroke="#555" strokeWidth="4.500" />
                <path d="M2 1l8 8M10 1L2 9" stroke="#fff" strokeWidth="2.800" />
              </svg>
            </CaptionButton>
          </CaptionButtons>
        </TitleBar>
        <Client>
          <MenuBar>
            {['File', 'Scope', 'Data', 'Help'].map((item) => <MenuItem key={item}>{item}</MenuItem>)}
          </MenuBar>
          <Toolbar>
            <Grip />
            <IconButton aria-label="Exit">
              <svg width="16" height="16">
                <rect x=".5" y=".5" width="15" height="15" rx="2" fill="#b9603a" stroke="#91401f" />
                <circle cx="8" cy="8" r="5" fill="none" stroke="#fff" strokeWidth="1.500" />
                <path d="M8 5v6" stroke="#fff" strokeWidth="2" />
              </svg>
            </IconButton>
            <Separator />
            <IconButton aria-label="Open"><Folder /></IconButton>
            <IconButton aria-label="Save">
              <svg width="16" height="16">
                <path d="M1.500 1.500h13v13h-13z" fill="#75839c" stroke="#5c6a84" />
                <path d="M4 2h8v5H4z" fill="#cfe0f4" />
                <path d="M3 9h10v5H3z" fill="#e6e9ef" />
                <path d="M5 10h2v4H5z" fill="#64748f" />
              </svg>
            </IconButton>
            <Separator />
            <IconButton aria-label="Catalog">
              <svg width="16" height="15" fill="none" stroke="#cc1111" strokeWidth="2">
                <path d="M0 1h5M7 1h3M12 1h4M1 4v4M1 10v4M15 3v3M15 8v6M3 14h4M9 14h4" />
                <path d="M4 4h6q1 0 1 2v5h3M11 7H7q-2 0-2 2t2 2h4" strokeWidth="2.500" />
              </svg>
            </IconButton>
            <IconButton aria-label="Settings"><Wrench /></IconButton>
            <Separator />
            <ToolbarCombos>
              <Combo look="tool" label="Observatory" value="Observatorio del Pino" width={199} />
              <Combo look="tool" label="Camera" value="SimCam" width={150} />
              <Combo look="tool" label="Telescope" value="Vixen VISAC" width={150} />
            </ToolbarCombos>
          </Toolbar>
          <Body>
            <Sidebar />
            <Center>
              <TabBar>
                <Tab>Sky Projection</Tab>
                <Tab>Guide Cam</Tab>
                <Tab>Analize</Tab>
                <ActiveTab>GoTo</ActiveTab>
                <TabDivider />
              </TabBar>
              <ScrollFrame>
                <Viewport>
                  <Planning />
                  <ObjectSearch />
                  <ObjectInfo />
                </Viewport>
                <ScrollBar vertical size="90%" />
                <ScrollBar size="99%" />
              </ScrollFrame>
            </Center>
            <RightColumn>
              <Preview>
                <Screen>
                  <svg width="3" height="2"><path d="M1 0h1v1H1z" fill="#fff" /><path d="M2 0h1v1H2z" fill="#d33" /></svg>
                </Screen>
                <ScrollBar vertical dim />
              </Preview>
              <PanBox>
                <PanGrid>
                  <PanVertical><ScrollBar vertical size="24px" /></PanVertical>
                  <PanHorizontal><ScrollBar size="47px" /></PanHorizontal>
                  <PanSlider>
                    <TallSlider aria-label="Vertical gain" defaultValue={16} />
                    <TickRow count={20} vertical />
                  </PanSlider>
                </PanGrid>
                <BottomSlider>
                  <Slider aria-label="Horizontal gain" defaultValue={0} />
                  <TickRow count={10} />
                </BottomSlider>
              </PanBox>
              <CameraPanel />
              <ScopePanel />
            </RightColumn>
          </Body>
          <StatusBar>
            <Separator />
            <StatusItem $wide>Guider: SimCam</StatusItem>
            <Separator />
            <StatusItem>Screen (x, y): (-103.00, -1.00) Cam (x, y): (103.00, -1.00) Eq (RA, DC): (11h13m35s, +38º16'46'')</StatusItem>
            <Spread />
            <svg width="12" height="12" viewBox="0 0 12 12" fill="#9c9c9c">
              <path d="M9 1h2v2H9zM5 5h2v2H5zM9 5h2v2H9zM1 9h2v2H1zM5 9h2v2H5zM9 9h2v2H9z" />
            </svg>
          </StatusBar>
        </Client>
        <Watermark aria-hidden="true">
          SOFTPEDIA
          <small>www.softpedia.com</small>
        </Watermark>
      </Window>
    </>
  );
}

export default App
